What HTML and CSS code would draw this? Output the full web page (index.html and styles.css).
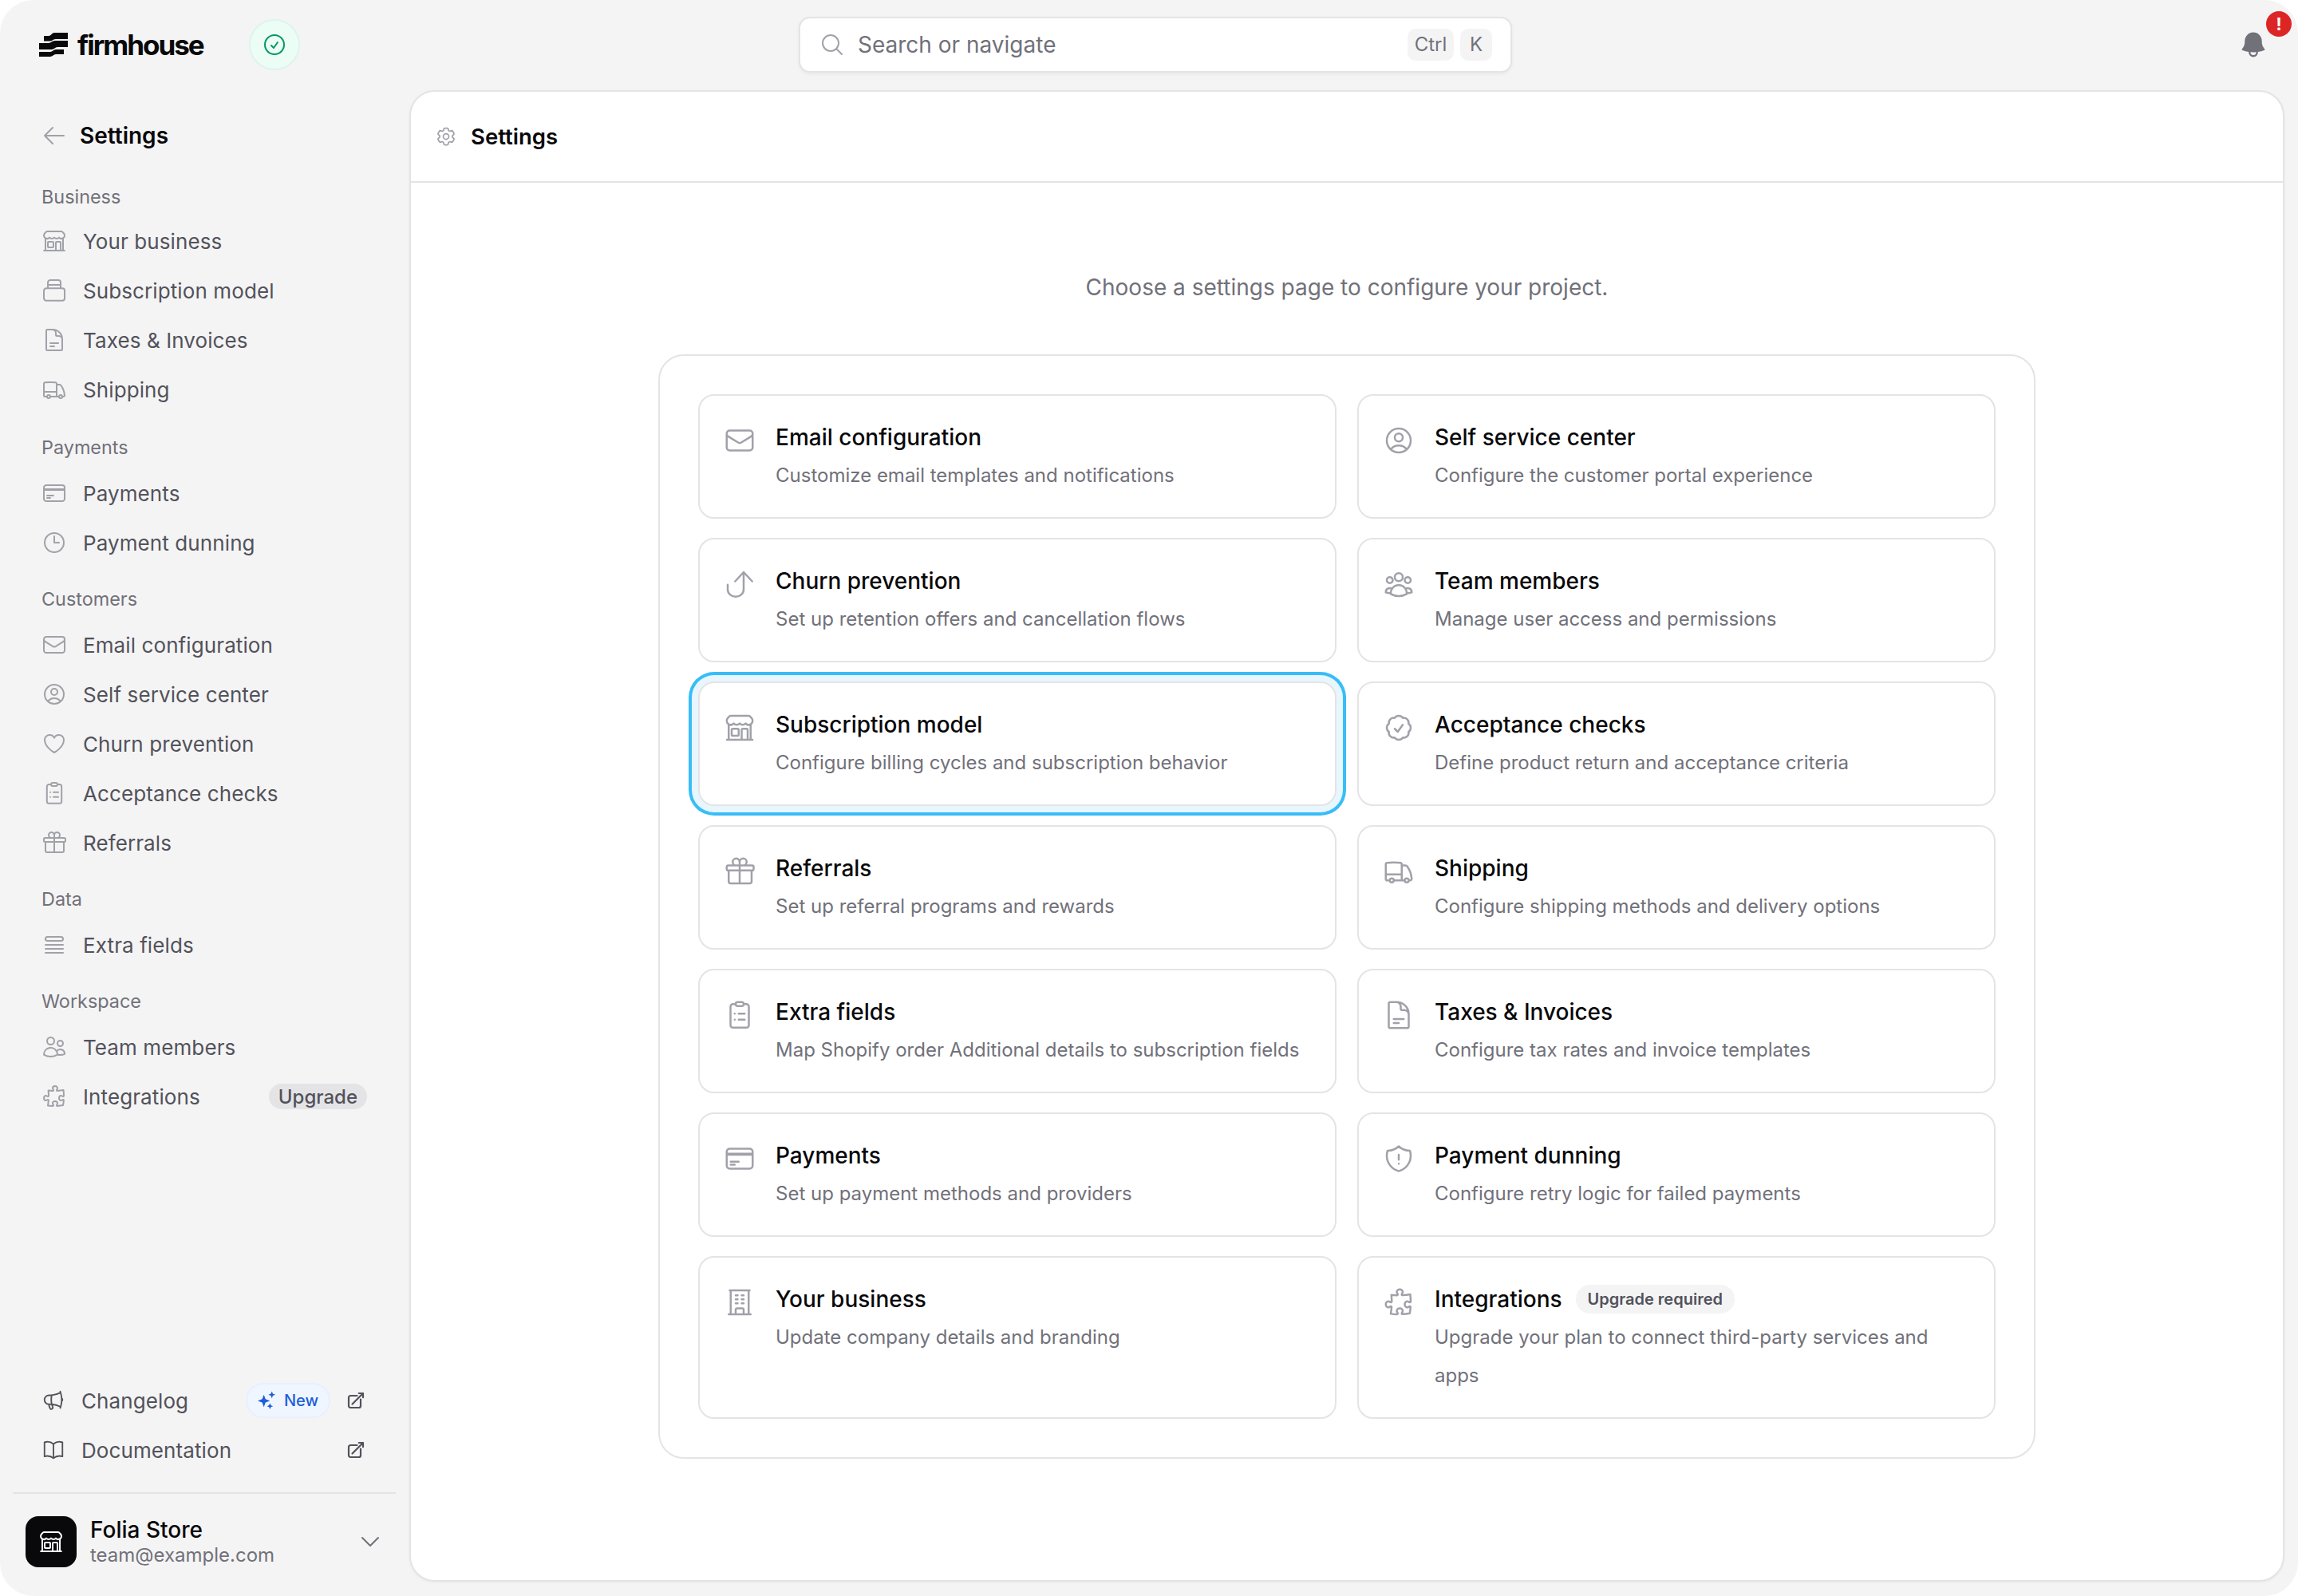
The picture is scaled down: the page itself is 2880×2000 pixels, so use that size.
FILE: index.html
```html
<!DOCTYPE html>
<html lang="en">
<head>
<meta charset="utf-8">
<title>Settings</title>
<link rel="stylesheet" href="styles.css">
</head>
<body>
<svg class="sprite" xmlns="http://www.w3.org/2000/svg">
  <symbol id="i-store" viewBox="0 0 24 24"><path d="M13.5 21v-7.5a.75.75 0 0 1 .75-.75h3a.75.75 0 0 1 .75.75V21m-4.5 0H2.36m11.14 0H18m0 0h3.64m-1.39 0V9.349M3.75 21V9.349m0 0a3.001 3.001 0 0 0 3.75-.615A2.993 2.993 0 0 0 9.75 9.75c.896 0 1.7-.393 2.25-1.016a2.993 2.993 0 0 0 2.25 1.016c.896 0 1.7-.393 2.25-1.015a3.001 3.001 0 0 0 3.75.614m-16.5 0a3.004 3.004 0 0 1-.621-4.72l1.189-1.19A1.5 1.5 0 0 1 5.378 3h13.243a1.5 1.5 0 0 1 1.06.44l1.19 1.189a3 3 0 0 1-.621 4.72M6.75 18h3.75a.75.75 0 0 0 .75-.75V13.5a.75.75 0 0 0-.75-.75H6.75a.75.75 0 0 0-.75.75v3.75c0 .414.336.75.75.75Z"/></symbol>
  <symbol id="i-box" viewBox="0 0 24 24"><path d="M4.5 10h15a2.25 2.25 0 0 1 2.25 2.25v7a2.25 2.25 0 0 1-2.25 2.25h-15a2.25 2.25 0 0 1-2.25-2.25v-7A2.25 2.25 0 0 1 4.5 10ZM6 10V4.500a2.25 2.25 0 0 1 2.25-2.25h7.500A2.25 2.25 0 0 1 18 4.500V10M6 6.750h12"/></symbol>
  <symbol id="i-doc" viewBox="0 0 24 24"><path d="M19.5 14.25v-2.625a3.375 3.375 0 0 0-3.375-3.375h-1.5A1.125 1.125 0 0 1 13.5 7.125v-1.5a3.375 3.375 0 0 0-3.375-3.375H8.25m0 12.75h7.5m-7.5 3H12M10.5 2.25H5.625c-.621 0-1.125.504-1.125 1.125v17.25c0 .621.504 1.125 1.125 1.125h12.75c.621 0 1.125-.504 1.125-1.125V11.25a9 9 0 0 0-9-9Z"/></symbol>
  <symbol id="i-truck" viewBox="0 0 24 24"><path d="M8.25 18.75a1.5 1.5 0 0 1-3 0m3 0a1.5 1.5 0 0 0-3 0m3 0h6m-9 0H3.375a1.125 1.125 0 0 1-1.125-1.125V14.25m17.25 4.5a1.5 1.5 0 0 1-3 0m3 0a1.5 1.5 0 0 0-3 0m3 0h1.125c.621 0 1.129-.504 1.09-1.124a17.902 17.902 0 0 0-3.213-9.193 2.056 2.056 0 0 0-1.58-.86H14.25M16.5 18.75h-2.25m0-11.177v-.958c0-.568-.422-1.048-.987-1.106a48.554 48.554 0 0 0-10.026 0 1.106 1.106 0 0 0-.987 1.106v7.635m12-6.677v6.677m0 4.5v-4.5m0 0h-12"/></symbol>
  <symbol id="i-card" viewBox="0 0 24 24"><path d="M2.25 8.25h19.5M2.25 9h19.5m-16.5 5.25h6m-6 2.25h3m-3.75 3h15a2.25 2.25 0 0 0 2.25-2.25V6.75A2.25 2.25 0 0 0 19.5 4.5h-15a2.25 2.25 0 0 0-2.25 2.25v10.5A2.25 2.25 0 0 0 4.5 19.5Z"/></symbol>
  <symbol id="i-clock" viewBox="0 0 24 24"><path d="M12 6v6h4.5m4.5 0a9 9 0 1 1-18 0 9 9 0 0 1 18 0Z"/></symbol>
  <symbol id="i-mail" viewBox="0 0 24 24"><path d="M21.75 6.75v10.5a2.25 2.25 0 0 1-2.25 2.25h-15a2.25 2.25 0 0 1-2.25-2.25V6.75m19.5 0A2.25 2.25 0 0 0 19.5 4.5h-15a2.25 2.25 0 0 0-2.25 2.25m19.5 0v.243a2.25 2.25 0 0 1-1.07 1.916l-7.5 4.615a2.25 2.25 0 0 1-2.36 0L3.32 8.91a2.25 2.25 0 0 1-1.07-1.916V6.75"/></symbol>
  <symbol id="i-user" viewBox="0 0 24 24"><path d="M17.982 18.725A7.488 7.488 0 0 0 12 15.75a7.488 7.488 0 0 0-5.982 2.975m11.963 0a9 9 0 1 0-11.963 0m11.963 0A8.966 8.966 0 0 1 12 21a8.966 8.966 0 0 1-5.982-2.275M15 9.75a3 3 0 1 1-6 0 3 3 0 0 1 6 0Z"/></symbol>
  <symbol id="i-heart" viewBox="0 0 24 24"><path d="M21 8.25c0-2.485-2.099-4.5-4.688-4.5-1.935 0-3.597 1.126-4.312 2.733-.715-1.607-2.377-2.733-4.313-2.733C5.1 3.75 3 5.765 3 8.25c0 7.22 9 12 9 12s9-4.78 9-12Z"/></symbol>
  <symbol id="i-clip" viewBox="0 0 24 24"><path d="M9 3.75H7a1.9 1.9 0 0 0-1.9 1.9V19.6A1.9 1.9 0 0 0 7 21.500h10a1.9 1.9 0 0 0 1.9-1.9V5.650A1.9 1.9 0 0 0 17 3.750h-2M10.5 2.250h3A1.5 1.5 0 0 1 15 3.750v0a1.5 1.5 0 0 1-1.5 1.5h-3A1.5 1.5 0 0 1 9 3.750v0a1.5 1.5 0 0 1 1.5-1.5ZM11.250 11h4.500m-4.500 4.500h4.500M8.250 11h.01m-.01 4.500h.01"/></symbol>
  <symbol id="i-gift" viewBox="0 0 24 24"><path d="M21 11.25v8.25a1.5 1.5 0 0 1-1.5 1.5H5.25a1.5 1.5 0 0 1-1.5-1.5v-8.25M12 4.875A2.625 2.625 0 1 0 9.375 7.5H12m0-2.625V7.5m0-2.625A2.625 2.625 0 1 1 14.625 7.5H12m0 0V21m-8.625-9.75h18c.621 0 1.125-.504 1.125-1.125v-1.5c0-.621-.504-1.125-1.125-1.125h-18c-.621 0-1.125.504-1.125 1.125v1.5c0 .621.504 1.125 1.125 1.125Z"/></symbol>
  <symbol id="i-queue" viewBox="0 0 24 24"><path d="M3.75 12h16.5m-16.5 3.75h16.5m-16.5 3.75h16.5M5.625 4.5h12.75a1.875 1.875 0 0 1 0 3.75H5.625a1.875 1.875 0 0 1 0-3.75Z"/></symbol>
  <symbol id="i-users" viewBox="0 0 24 24"><path d="M15 19.128a9.38 9.38 0 0 0 2.625.372 9.337 9.337 0 0 0 4.121-.952 4.125 4.125 0 0 0-7.533-2.493M15 19.128v-.003c0-1.113-.285-2.16-.786-3.07M15 19.128v.106A12.318 12.318 0 0 1 8.624 21c-2.331 0-4.512-.645-6.374-1.766l-.001-.109a6.375 6.375 0 0 1 11.964-3.07M12 6.375a3.375 3.375 0 1 1-6.75 0 3.375 3.375 0 0 1 6.75 0Zm8.25 2.25a2.625 2.625 0 1 1-5.25 0 2.625 2.625 0 0 1 5.25 0Z"/></symbol>
  <symbol id="i-group" viewBox="0 0 24 24"><path d="M18 18.72a9.094 9.094 0 0 0 3.741-.479 3 3 0 0 0-4.682-2.72m.94 3.198.001.031c0 .225-.012.447-.037.666A11.944 11.944 0 0 1 12 21c-2.17 0-4.207-.576-5.963-1.584A6.062 6.062 0 0 1 6 18.719m12 0a5.971 5.971 0 0 0-.941-3.197m0 0A5.995 5.995 0 0 0 12 12.75a5.995 5.995 0 0 0-5.058 2.772m0 0a3 3 0 0 0-4.681 2.72 8.986 8.986 0 0 0 3.74.477m.94-3.197a5.971 5.971 0 0 0-.94 3.197M15 6.75a3 3 0 1 1-6 0 3 3 0 0 1 6 0Zm6 2.25a2.25 2.25 0 1 1-4.5 0 2.25 2.25 0 0 1 4.5 0Zm-13.5 0a2.25 2.25 0 1 1-4.5 0 2.25 2.25 0 0 1 4.5 0Z"/></symbol>
  <symbol id="i-puzzle" viewBox="0 0 24 24"><path d="M14.25 6.087c0-.355.186-.676.401-.959.221-.29.349-.634.349-1.003 0-1.036-1.007-1.875-2.25-1.875s-2.25.84-2.25 1.875c0 .369.128.713.349 1.003.215.283.401.604.401.959v0a.64.64 0 0 1-.657.643 48.39 48.39 0 0 1-4.163-.3c.186 1.613.293 3.25.315 4.907a.656.656 0 0 1-.658.663v0c-.355 0-.676-.186-.959-.401a1.647 1.647 0 0 0-1.003-.349c-1.036 0-1.875 1.007-1.875 2.25s.84 2.25 1.875 2.25c.369 0 .713-.128 1.003-.349.283-.215.604-.401.959-.401v0c.31 0 .555.26.532.57a48.039 48.039 0 0 1-.642 5.056c1.518.19 3.058.309 4.616.354a.64.64 0 0 0 .657-.643v0c0-.355-.186-.676-.401-.959a1.647 1.647 0 0 1-.349-1.003c0-1.035 1.008-1.875 2.25-1.875 1.243 0 2.25.84 2.25 1.875 0 .369-.128.713-.349 1.003-.215.283-.4.604-.4.959v0c0 .333.277.599.61.58a48.1 48.1 0 0 0 5.427-.63 48.05 48.05 0 0 0 .582-4.717.532.532 0 0 0-.533-.57v0c-.355 0-.676.186-.959.401-.29.221-.634.349-1.003.349-1.035 0-1.875-1.007-1.875-2.25s.84-2.25 1.875-2.25c.37 0 .713.128 1.003.349.283.215.604.401.96.401v0a.656.656 0 0 0 .658-.663 48.422 48.422 0 0 0-.37-5.36c-1.886.342-3.81.574-5.766.689a.578.578 0 0 1-.61-.58v0Z"/></symbol>
  <symbol id="i-mega" viewBox="0 0 24 24"><path d="M10.34 15.84c-.688-.06-1.386-.09-2.09-.09H7.5a4.5 4.5 0 1 1 0-9h.75c.704 0 1.402-.03 2.09-.09m0 9.18c.253.962.584 1.892.985 2.783.247.55.06 1.21-.463 1.511l-.657.38c-.551.318-1.26.117-1.527-.461a20.845 20.845 0 0 1-1.44-4.282m3.102.069a18.03 18.03 0 0 1-.59-4.59c0-1.586.205-3.124.59-4.59m0 9.18a23.848 23.848 0 0 1 8.835 2.535M10.34 6.66a23.847 23.847 0 0 0 8.835-2.535m0 0A23.74 23.74 0 0 0 18.795 3m.38 1.125a23.91 23.91 0 0 1 1.014 5.395m-1.014 8.855c-.118.38-.245.754-.38 1.125m.38-1.125a23.91 23.91 0 0 0 1.014-5.395m0-3.46c.495.413.811 1.035.811 1.73 0 .695-.316 1.317-.811 1.73m0-3.46a24.347 24.347 0 0 1 0 3.46"/></symbol>
  <symbol id="i-book" viewBox="0 0 24 24"><path d="M12 6.042A8.967 8.967 0 0 0 6 3.75c-1.052 0-2.062.18-3 .512v14.25A8.987 8.987 0 0 1 6 18c2.305 0 4.408.867 6 2.292m0-14.25a8.966 8.966 0 0 1 6-2.292c1.052 0 2.062.18 3 .512v14.25A8.987 8.987 0 0 0 18 18a8.967 8.967 0 0 0-6 2.292m0-14.25v14.25"/></symbol>
  <symbol id="i-ext" viewBox="0 0 24 24"><path d="M13.5 6H5.25A2.25 2.25 0 0 0 3 8.25v10.5A2.25 2.25 0 0 0 5.25 21h10.5A2.25 2.25 0 0 0 18 18.75V10.5m-10.5 6L21 3m0 0h-5.25M21 3v5.25"/></symbol>
  <symbol id="i-left" viewBox="0 0 24 24"><path d="M10.5 19.5 3 12m0 0 7.5-7.5M3 12h18"/></symbol>
  <symbol id="i-down" viewBox="0 0 24 24"><path d="m19.5 8.25-7.5 7.5-7.5-7.5"/></symbol>
  <symbol id="i-search" viewBox="0 0 24 24"><path d="m21 21-5.197-5.197m0 0A7.5 7.5 0 1 0 5.196 5.196a7.5 7.5 0 0 0 10.607 10.607Z"/></symbol>
  <symbol id="i-check" viewBox="0 0 24 24"><path d="M9 12.75 11.25 15 15 9.75M21 12a9 9 0 1 1-18 0 9 9 0 0 1 18 0Z"/></symbol>
  <symbol id="i-gear" viewBox="0 0 24 24"><path d="M9.594 3.94c.09-.542.56-.94 1.11-.94h2.593c.55 0 1.02.398 1.11.94l.213 1.281c.063.374.313.686.645.87.074.04.147.083.22.127.325.196.72.257 1.075.124l1.217-.456a1.125 1.125 0 0 1 1.37.49l1.296 2.247a1.125 1.125 0 0 1-.26 1.431l-1.003.827c-.293.241-.438.613-.43.992a7.723 7.723 0 0 1 0 .255c-.008.378.137.75.43.991l1.004.827c.424.35.534.955.26 1.43l-1.298 2.247a1.125 1.125 0 0 1-1.369.491l-1.217-.456c-.355-.133-.75-.072-1.076.124a6.47 6.47 0 0 1-.22.128c-.331.183-.581.495-.644.869l-.213 1.281c-.09.543-.56.94-1.11.94h-2.594c-.55 0-1.019-.398-1.11-.94l-.213-1.281c-.062-.374-.312-.686-.644-.87a6.52 6.52 0 0 1-.22-.127c-.325-.196-.72-.257-1.076-.124l-1.217.456a1.125 1.125 0 0 1-1.369-.49l-1.297-2.247a1.125 1.125 0 0 1 .26-1.431l1.004-.827c.292-.24.437-.613.43-.991a6.932 6.932 0 0 1 0-.255c.007-.38-.138-.751-.43-.992l-1.004-.827a1.125 1.125 0 0 1-.26-1.43l1.297-2.247a1.125 1.125 0 0 1 1.37-.491l1.216.456c.356.133.751.072 1.076-.124.072-.044.146-.086.22-.128.332-.183.582-.495.644-.869l.214-1.28ZM15 12a3 3 0 1 1-6 0 3 3 0 0 1 6 0Z"/></symbol>
  <symbol id="i-churn" viewBox="0 0 24 24"><path d="M3 12.5V16a6 5.5 0 0 0 12 0V3M8.6 9.9 15 3l6.4 6.9"/></symbol>
  <symbol id="i-badge" viewBox="0 0 24 24"><path d="M9 12.75 11.25 15 15 9.75M21 12c0 1.268-.63 2.39-1.593 3.068a3.745 3.745 0 0 1-1.043 3.296 3.745 3.745 0 0 1-3.296 1.043A3.745 3.745 0 0 1 12 21c-1.268 0-2.39-.63-3.068-1.593a3.746 3.746 0 0 1-3.296-1.043 3.745 3.745 0 0 1-1.043-3.296A3.745 3.745 0 0 1 3 12c0-1.268.63-2.39 1.593-3.068a3.745 3.745 0 0 1 1.043-3.296 3.746 3.746 0 0 1 3.296-1.043A3.746 3.746 0 0 1 12 3c1.268 0 2.39.63 3.068 1.593a3.746 3.746 0 0 1 3.296 1.043 3.746 3.746 0 0 1 1.043 3.296A3.745 3.745 0 0 1 21 12Z"/></symbol>
  <symbol id="i-office" viewBox="0 0 24 24"><path d="M3.75 21h16.5M4.5 3h15M5.25 3v18m13.5-18v18M9 6.75h1.5m-1.5 3h1.5m-1.5 3h1.5m3-6H15m-1.5 3H15m-1.5 3H15M9 21v-3.375c0-.621.504-1.125 1.125-1.125h3.75c.621 0 1.125.504 1.125 1.125V21"/></symbol>
  <symbol id="i-shield" viewBox="0 0 24 24"><path d="M12 9v3.75m0-10.036A11.959 11.959 0 0 1 3.598 6 11.99 11.99 0 0 0 3 9.75c0 5.592 3.824 10.29 9 11.622 5.176-1.332 9-6.03 9-11.622 0-1.31-.21-2.571-.598-3.751h-.152c-3.196 0-6.1-1.25-8.25-3.286Zm0 13.036h.008v.008H12v-.008Z"/></symbol>
</svg>

<div class="app">
  <header class="topbar">
    <div class="brand">
      <svg class="logo-mark" viewBox="0 0 36 30"><path d="M19 0h17v8H21c-3 0-4 2-7 2.500H6V4h6c3 0 4-4 7-4Z"/><path d="M0 13h12c3 0 4-3 8-3h16v8H23c-3 0-4 3-7 3H0Z"/><path d="M0 24h14c3 0 4-3 7-3h10v6H21c-3 0-4 3-7 3H0Z"/></svg>
      <span class="logo-word">firmhouse</span>
      <span class="status"><svg class="ic ic32"><use href="#i-check"/></svg></span>
    </div>
    <div class="search">
      <svg class="ic ic32 muted"><use href="#i-search"/></svg>
      <span class="search-text">Search or navigate</span>
      <kbd class="key">Ctrl</kbd>
      <kbd class="key key-k">K</kbd>
    </div>
    <div class="bell">
      <svg class="bell-ic" viewBox="0 0 24 24"><path fill-rule="evenodd" clip-rule="evenodd" d="M5.25 9a6.75 6.75 0 0 1 13.5 0v.75c0 2.123.8 4.057 2.118 5.52a.75.75 0 0 1-.297 1.206c-1.544.57-3.16.99-4.831 1.243a3.75 3.75 0 1 1-7.48 0 24.585 24.585 0 0 1-4.831-1.244.75.75 0 0 1-.298-1.205A8.217 8.217 0 0 0 5.25 9.750V9Zm4.502 8.900a2.25 2.25 0 1 0 4.496 0 25.057 25.057 0 0 1-4.496 0Z"/></svg>
      <span class="alert">!</span>
    </div>
  </header>

  <div class="body">
    <aside class="sidebar">
      <div class="back"><svg class="ic ic32 muted"><use href="#i-left"/></svg><span>Settings</span></div>

      <nav class="nav">
        <div class="group">
          <div class="label">Business</div>
          <a class="item"><svg class="ic ic32 muted"><use href="#i-store"/></svg>Your business</a>
          <a class="item"><svg class="ic ic32 muted"><use href="#i-box"/></svg>Subscription model</a>
          <a class="item"><svg class="ic ic32 muted"><use href="#i-doc"/></svg>Taxes &amp; Invoices</a>
          <a class="item"><svg class="ic ic32 muted"><use href="#i-truck"/></svg>Shipping</a>
        </div>
        <div class="group">
          <div class="label">Payments</div>
          <a class="item"><svg class="ic ic32 muted"><use href="#i-card"/></svg>Payments</a>
          <a class="item"><svg class="ic ic32 muted"><use href="#i-clock"/></svg>Payment dunning</a>
        </div>
        <div class="group">
          <div class="label">Customers</div>
          <a class="item"><svg class="ic ic32 muted"><use href="#i-mail"/></svg>Email configuration</a>
          <a class="item"><svg class="ic ic32 muted"><use href="#i-user"/></svg>Self service center</a>
          <a class="item"><svg class="ic ic32 muted"><use href="#i-heart"/></svg>Churn prevention</a>
          <a class="item"><svg class="ic ic32 muted"><use href="#i-clip"/></svg>Acceptance checks</a>
          <a class="item"><svg class="ic ic32 muted"><use href="#i-gift"/></svg>Referrals</a>
        </div>
        <div class="group">
          <div class="label">Data</div>
          <a class="item"><svg class="ic ic32 muted"><use href="#i-queue"/></svg>Extra fields</a>
        </div>
        <div class="group">
          <div class="label">Workspace</div>
          <a class="item"><svg class="ic ic32 muted"><use href="#i-users"/></svg>Team members</a>
          <a class="item"><svg class="ic ic32 muted"><use href="#i-puzzle"/></svg>Integrations<span class="upgrade">Upgrade</span></a>
        </div>
      </nav>

      <div class="links">
        <a class="link"><svg class="ic ic30 dark"><use href="#i-mega"/></svg>Changelog<span class="new"><svg class="spark" viewBox="0 0 24 24"><path d="M8 4.500 10.200 10.300 16 12.500 10.200 14.700 8 20.500 5.800 14.700 0 12.500 5.800 10.300ZM18.500 0 19.800 3.200 23 4.500 19.800 5.800 18.500 9 17.200 5.800 14 4.500 17.200 3.200ZM16 15.500 17.200 18.300 20 19.500 17.200 20.700 16 23.500 14.800 20.700 12 19.500 14.800 18.300Z"/></svg>New</span><svg class="ic ext"><use href="#i-ext"/></svg></a>
        <a class="link"><svg class="ic ic30 dark"><use href="#i-book"/></svg>Documentation<svg class="ic ext ext-solo"><use href="#i-ext"/></svg></a>
      </div>

      <div class="account">
        <span class="avatar"><svg class="ic ic32 white"><use href="#i-store"/></svg></span>
        <div class="who">
          <div class="who-name">Folia Store</div>
          <div class="who-mail">team@example.com</div>
        </div>
        <svg class="ic ic32 chev"><use href="#i-down"/></svg>
      </div>
    </aside>

    <main class="main">
      <div class="main-head"><svg class="ic ic28 muted"><use href="#i-gear"/></svg><h1>Settings</h1></div>
      <div class="main-body">
        <p class="intro">Choose a settings page to configure your project.</p>
        <section class="panel">
          <a class="card"><svg class="ic ic40 muted"><use href="#i-mail"/></svg><div class="card-text"><div class="card-title">Email configuration</div><div class="card-desc">Customize email templates and notifications</div></div></a>
          <a class="card"><svg class="ic ic40 muted"><use href="#i-user"/></svg><div class="card-text"><div class="card-title">Self service center</div><div class="card-desc">Configure the customer portal experience</div></div></a>
          <a class="card"><svg class="ic ic40 muted"><use href="#i-churn"/></svg><div class="card-text"><div class="card-title">Churn prevention</div><div class="card-desc">Set up retention offers and cancellation flows</div></div></a>
          <a class="card"><svg class="ic ic40 muted"><use href="#i-group"/></svg><div class="card-text"><div class="card-title">Team members</div><div class="card-desc">Manage user access and permissions</div></div></a>
          <a class="card card-focus"><svg class="ic ic40 muted"><use href="#i-store"/></svg><div class="card-text"><div class="card-title">Subscription model</div><div class="card-desc">Configure billing cycles and subscription behavior</div></div></a>
          <a class="card"><svg class="ic ic40 muted"><use href="#i-badge"/></svg><div class="card-text"><div class="card-title">Acceptance checks</div><div class="card-desc">Define product return and acceptance criteria</div></div></a>
          <a class="card"><svg class="ic ic40 muted"><use href="#i-gift"/></svg><div class="card-text"><div class="card-title">Referrals</div><div class="card-desc">Set up referral programs and rewards</div></div></a>
          <a class="card"><svg class="ic ic40 muted"><use href="#i-truck"/></svg><div class="card-text"><div class="card-title">Shipping</div><div class="card-desc">Configure shipping methods and delivery options</div></div></a>
          <a class="card"><svg class="ic ic40 muted"><use href="#i-clip"/></svg><div class="card-text"><div class="card-title">Extra fields</div><div class="card-desc">Map Shopify order Additional details to subscription fields</div></div></a>
          <a class="card"><svg class="ic ic40 muted"><use href="#i-doc"/></svg><div class="card-text"><div class="card-title">Taxes &amp; Invoices</div><div class="card-desc">Configure tax rates and invoice templates</div></div></a>
          <a class="card"><svg class="ic ic40 muted"><use href="#i-card"/></svg><div class="card-text"><div class="card-title">Payments</div><div class="card-desc">Set up payment methods and providers</div></div></a>
          <a class="card"><svg class="ic ic40 muted"><use href="#i-shield"/></svg><div class="card-text"><div class="card-title">Payment dunning</div><div class="card-desc">Configure retry logic for failed payments</div></div></a>
          <a class="card"><svg class="ic ic40 muted"><use href="#i-office"/></svg><div class="card-text"><div class="card-title">Your business</div><div class="card-desc">Update company details and branding</div></div></a>
          <a class="card"><svg class="ic ic40 muted"><use href="#i-puzzle"/></svg><div class="card-text"><div class="card-title">Integrations<span class="req">Upgrade required</span></div><div class="card-desc">Upgrade your plan to connect third-party services and apps</div></div></a>
        </section>
      </div>
    </main>
  </div>
</div>
</body>
</html>
```

FILE: styles.css
```css
* { box-sizing: border-box; }
html, body { margin: 0; height: 100%; overflow: hidden; background: #fff; }
body { font-family: "Inter", "Liberation Sans", sans-serif; color: #09090b; }
a { color: inherit; text-decoration: none; }
.sprite { display: none; }

.app {
  width: 2880px;
  height: 2000px;
  background: #f4f4f4;
  border-radius: 42px;
  display: flex;
  flex-direction: column;
  overflow: hidden;
}

.ic { fill: none; stroke: currentColor; stroke-width: 1.5; stroke-linecap: round; stroke-linejoin: round; flex: none; }
.ic28 { width: 28px; height: 28px; }
.ic30 { width: 30px; height: 30px; }
.ic32 { width: 32px; height: 32px; }
.ic40 { width: 40px; height: 40px; }
.muted { color: #a1a1aa; }
.dark { color: #52525b; }
.white { color: #fff; }

/* top bar */
.topbar { height: 113px; flex: none; display: flex; align-items: center; position: relative; padding: 0 0 2px 49px; }
.brand { display: flex; align-items: center; width: 952px; }
.logo-mark { width: 36px; height: 30px; fill: #09090b; flex: none; }
.logo-word { font-size: 35px; font-weight: 700; letter-spacing: -2px; margin-left: 12px; width: 214px; color: #09090b; line-height: 40px; }
.status {
  width: 64px; height: 64px; border-radius: 50%;
  background: #ecfdf5; border: 2px solid #dcf5ec; color: #059669;
  display: flex; align-items: center; justify-content: center;
  margin-left: 1px;
}
.search {
  width: 894px; height: 70px; background: #fff; border: 2px solid #e4e4e7; border-radius: 14px;
  display: flex; align-items: center; padding: 0 23px 0 24px;
  box-shadow: 0 2px 4px rgba(0,0,0,.05);
}
.search-text { font-size: 28px; color: #71717a; margin-left: 16px; flex: 1; }
.key {
  font-family: inherit; font-size: 24px; color: #71717a; background: #f4f4f5; border-radius: 10px;
  height: 40px; padding: 0 8px; min-width: 58px; display: flex; align-items: center; justify-content: center;
}
.key-k { min-width: 40px; margin-left: 8px; }
.bell { position: absolute; right: 37px; top: 37px; width: 38px; height: 38px; }
.bell-ic { width: 38px; height: 38px; fill: #71717a; display: block; }
.alert {
  position: absolute; left: 35px; top: -23px; width: 32px; height: 32px; border-radius: 50%;
  background: #dc2626; color: #fff; font-size: 21px; font-weight: 700;
  display: flex; align-items: center; justify-content: center;
}

/* layout */
.body { flex: 1; display: flex; min-height: 0; }

/* sidebar */
.sidebar { width: 513px; flex: none; display: flex; flex-direction: column; padding-top: 29px; }
.back { height: 56px; padding-left: 52px; display: flex; align-items: center; gap: 16px; font-size: 28px; font-weight: 600; color: #09090b; }
.nav { padding: 0 53px 0 52px; }
.group { margin-top: 22px; }
.group:first-child { margin-top: 31px; padding-bottom: 2px; }
.label { height: 36px; line-height: 36px; margin-bottom: 8px; font-size: 23.4px; color: #71717a; }
.group:first-child .label { margin-bottom: 6px; }
.item { height: 62px; display: flex; align-items: center; gap: 20px; font-size: 26px; letter-spacing: .1px; color: #52525b; }
.upgrade {
  margin-left: auto; height: 32px; padding: 0 12px; border-radius: 16px; background: #e4e4e7;
  font-size: 24px; font-weight: 500; letter-spacing: 0; color: #52525b; display: flex; align-items: center;
}
.links { margin-top: auto; padding: 0 55px 0 52px; }
.link { height: 62px; display: flex; align-items: center; gap: 20px; font-size: 26px; letter-spacing: .1px; color: #52525b; }
.new {
  margin-left: auto; height: 44px; padding: 0 13px; border-radius: 22px; background: #eff6ff; border: 2px solid #e6f1fe;
  color: #1d5fd8; font-size: 20px; font-weight: 500; letter-spacing: 0; display: flex; align-items: center; gap: 10px;
}
.spark { width: 23px; height: 24px; fill: #1d5fd8; flex: none; }
.ext { width: 24px; height: 24px; stroke-width: 2.2; color: #52525b; }
.ext-solo { margin-left: auto; }
.account {
  margin: 22px 17px 0 16px; border-top: 2px solid #e4e4e7; padding: 28px 16px 36px 16px;
  display: flex; align-items: center; gap: 17px;
}
.avatar { width: 64px; height: 64px; border-radius: 16px; background: #09090b; display: flex; align-items: center; justify-content: center; flex: none; }
.who { flex: 1; }
.who-name { font-size: 28px; font-weight: 500; line-height: 34px; color: #09090b; }
.who-mail { font-size: 24px; line-height: 30px; color: #71717a; }
.chev { color: #71717a; }

/* main */
.main {
  width: 2350px; height: 1869px; background: #fff; border: 2px solid #e4e4e7; border-radius: 32px;
  display: flex; flex-direction: column; box-shadow: 0 1px 3px rgba(0,0,0,.05);
}
.main-head { height: 114px; flex: none; border-bottom: 2px solid #e4e4e7; display: flex; align-items: center; gap: 17px; padding: 0 0 0 30px; }
.main-head h1 { margin: 0; font-size: 27.5px; font-weight: 600; color: #09090b; }
.main-body { display: flex; flex-direction: column; align-items: center; }
.intro { margin: 0; padding-top: 109px; height: 191px; line-height: 44px; font-size: 28px; color: #71717a; }
.panel {
  width: 1726px; border: 2px solid #e4e4e7; border-radius: 32px; padding: 48px;
  display: grid; grid-template-columns: 800px 800px; gap: 24px 26px;
  margin-top: 24px;
}
.card {
  border: 2px solid #e4e4e7; border-radius: 20px; padding: 28px 30px;
  display: flex; gap: 25px; background: #fff; min-width: 0;
}
.card-focus { box-shadow: 0 0 0 8px #e8f6fe, 0 0 0 12px #38bdf8; }
.card .ic40 { margin-top: 8px; }
.card-text { min-width: 0; flex: 1; }
.card-title { font-size: 28px; font-weight: 500; line-height: 48px; color: #09090b; display: flex; align-items: center; }
.card-desc { font-size: 24px; line-height: 48px; color: #71717a; }
.req {
  margin-left: 17px; height: 36px; padding: 0 15px; border-radius: 18px; background: #f4f4f5;
  font-size: 20px; font-weight: 600; color: #52525b; display: flex; align-items: center;
}
```
